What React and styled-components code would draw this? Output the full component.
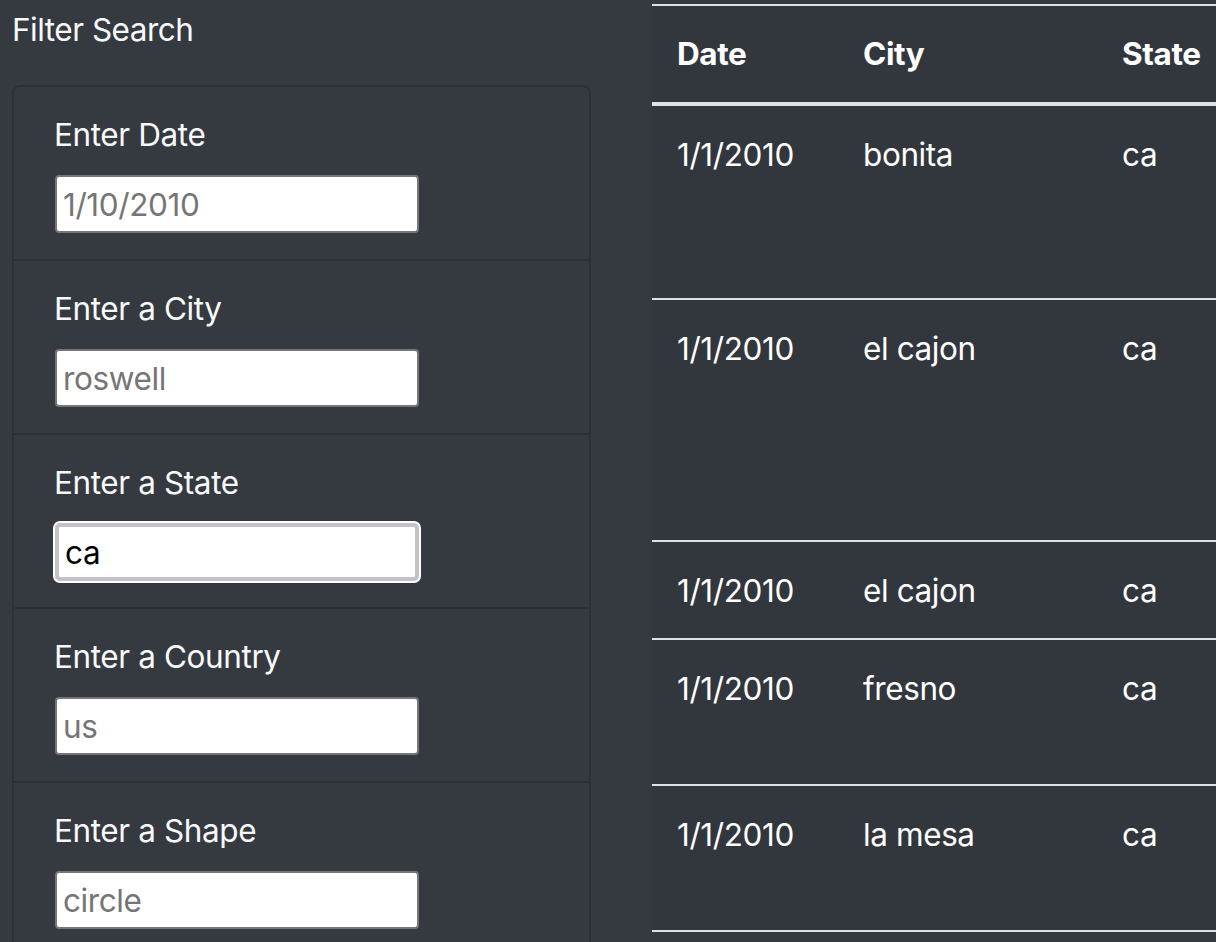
import React from 'react';
import styled, {createGlobalStyle} from 'styled-components';

const filters = [
    {label: 'Enter Date', placeholder: '1/10/2010'},
    {label: 'Enter a City', placeholder: 'roswell'},
    {label: 'Enter a State', placeholder: 'ca', value: 'ca', focused: true},
    {label: 'Enter a Country', placeholder: 'us'},
    {label: 'Enter a Shape', placeholder: 'circle'},
];

const columns = [
    {title: 'Date', width: 186},
    {title: 'City', width: 259},
    {title: 'State', width: 220},
];

const sightings = [
    {date: '1/1/2010', city: 'bonita', state: 'ca', height: 195},
    {date: '1/1/2010', city: 'el cajon', state: 'ca', height: 242},
    {date: '1/1/2010', city: 'el cajon', state: 'ca', height: 97},
    {date: '1/1/2010', city: 'fresno', state: 'ca', height: 146},
    {date: '1/1/2010', city: 'la mesa', state: 'ca', height: 146},
];

export default () => (
    <>
        <GlobalStyle />
        <Page>
            <Sidebar>
                <Title>Filter Search</Title>
                <Card>
                    {filters.map(f =>
                        <FilterItem key={f.label}>
                            <Label>{f.label}</Label>
                            <Input
                                $focused={f.focused}
                                placeholder={f.placeholder}
                                defaultValue={f.value}
                            />
                        </FilterItem>
                    )}
                </Card>
            </Sidebar>
            <TableWrap>
                <Table>
                    <colgroup>
                        {columns.map(c => <Col key={c.title} $w={c.width} />)}
                    </colgroup>
                    <thead>
                        <tr>
                            {columns.map(c => <Th key={c.title}>{c.title}</Th>)}
                        </tr>
                    </thead>
                    <tbody>
                        {sightings.map((s, idx) =>
                            <Row key={idx} $h={s.height}>
                                <Td>{s.date}</Td>
                                <Td>{s.city}</Td>
                                <Td>{s.state}</Td>
                            </Row>
                        )}
                    </tbody>
                </Table>
            </TableWrap>
        </Page>
    </>
);

const GlobalStyle = createGlobalStyle`
  html, body {
    margin: 0;
    background: #353a41;
    overflow: hidden;
  }
  body {
    font-family: Inter, "Noto Sans", sans-serif;
    color: #f8f9fa;
  }
`;

const Page = styled.div`
  display: grid;
  grid-template-columns: 579px 1fr;
  column-gap: 61px;
  padding-left: 12px;
  width: 1216px;
  height: 942px;
  box-sizing: border-box;
  overflow: hidden;
`;

const Sidebar = styled.div`
  display: flex;
  flex-direction: column;
`;

const Title = styled.div`
  font-size: 31.5px;
  line-height: 48px;
  padding-top: 6px;
  margin-bottom: 31px;
  letter-spacing: -0.5px;
`;

const Card = styled.div`
  border: 2px solid #2c3037;
  border-radius: 8px;
  display: flex;
  flex-direction: column;
`;

const FilterItem = styled.div`
  padding: 24px 40px 26px 41px;
  border-bottom: 2px solid #2c3037;
`;

const Label = styled.div`
  font-size: 31.5px;
  line-height: 48px;
  margin-bottom: 16px;
  margin-left: -1px;
  letter-spacing: -0.4px;
`;

const Input = styled.input`
  display: block;
  box-sizing: border-box;
  width: 364px;
  height: 58px;
  padding: 0 6px;
  font-family: Inter, "Noto Sans", sans-serif;
  font-size: 31.5px;
  letter-spacing: -0.4px;
  color: #000;
  background: #fff;
  border: ${p => p.$focused ? '4px solid #c3c3c3' : '2px solid #767676'};
  border-radius: ${p => p.$focused ? '5px' : '4px'};
  box-shadow: ${p => p.$focused ? '0 0 0 2px #fff' : 'none'};
  outline: none;
  &::placeholder {
    color: #757575;
  }
`;

const TableWrap = styled.div`
  padding-top: 4px;
  overflow: hidden;
`;

const Table = styled.table`
  width: 665px;
  border-collapse: collapse;
  background: #32363d;
  color: #fff;
  font-size: 31.5px;
  letter-spacing: -0.4px;
  table-layout: fixed;
  border-top: 2px solid #dee2e6;
`;

const Col = styled.col`
  width: ${p => p.$w}px;
`;

const Th = styled.th`
  text-align: left;
  font-weight: 700;
  padding: 24px 25px;
  line-height: 48px;
  white-space: nowrap;
  border-bottom: 4px solid #dee2e6;
`;

const Row = styled.tr`
  height: ${p => p.$h}px;
  border-bottom: 2px solid #dee2e6;
`;

const Td = styled.td`
  vertical-align: top;
  padding: 25px 25px 23px;
  line-height: 48px;
`;
